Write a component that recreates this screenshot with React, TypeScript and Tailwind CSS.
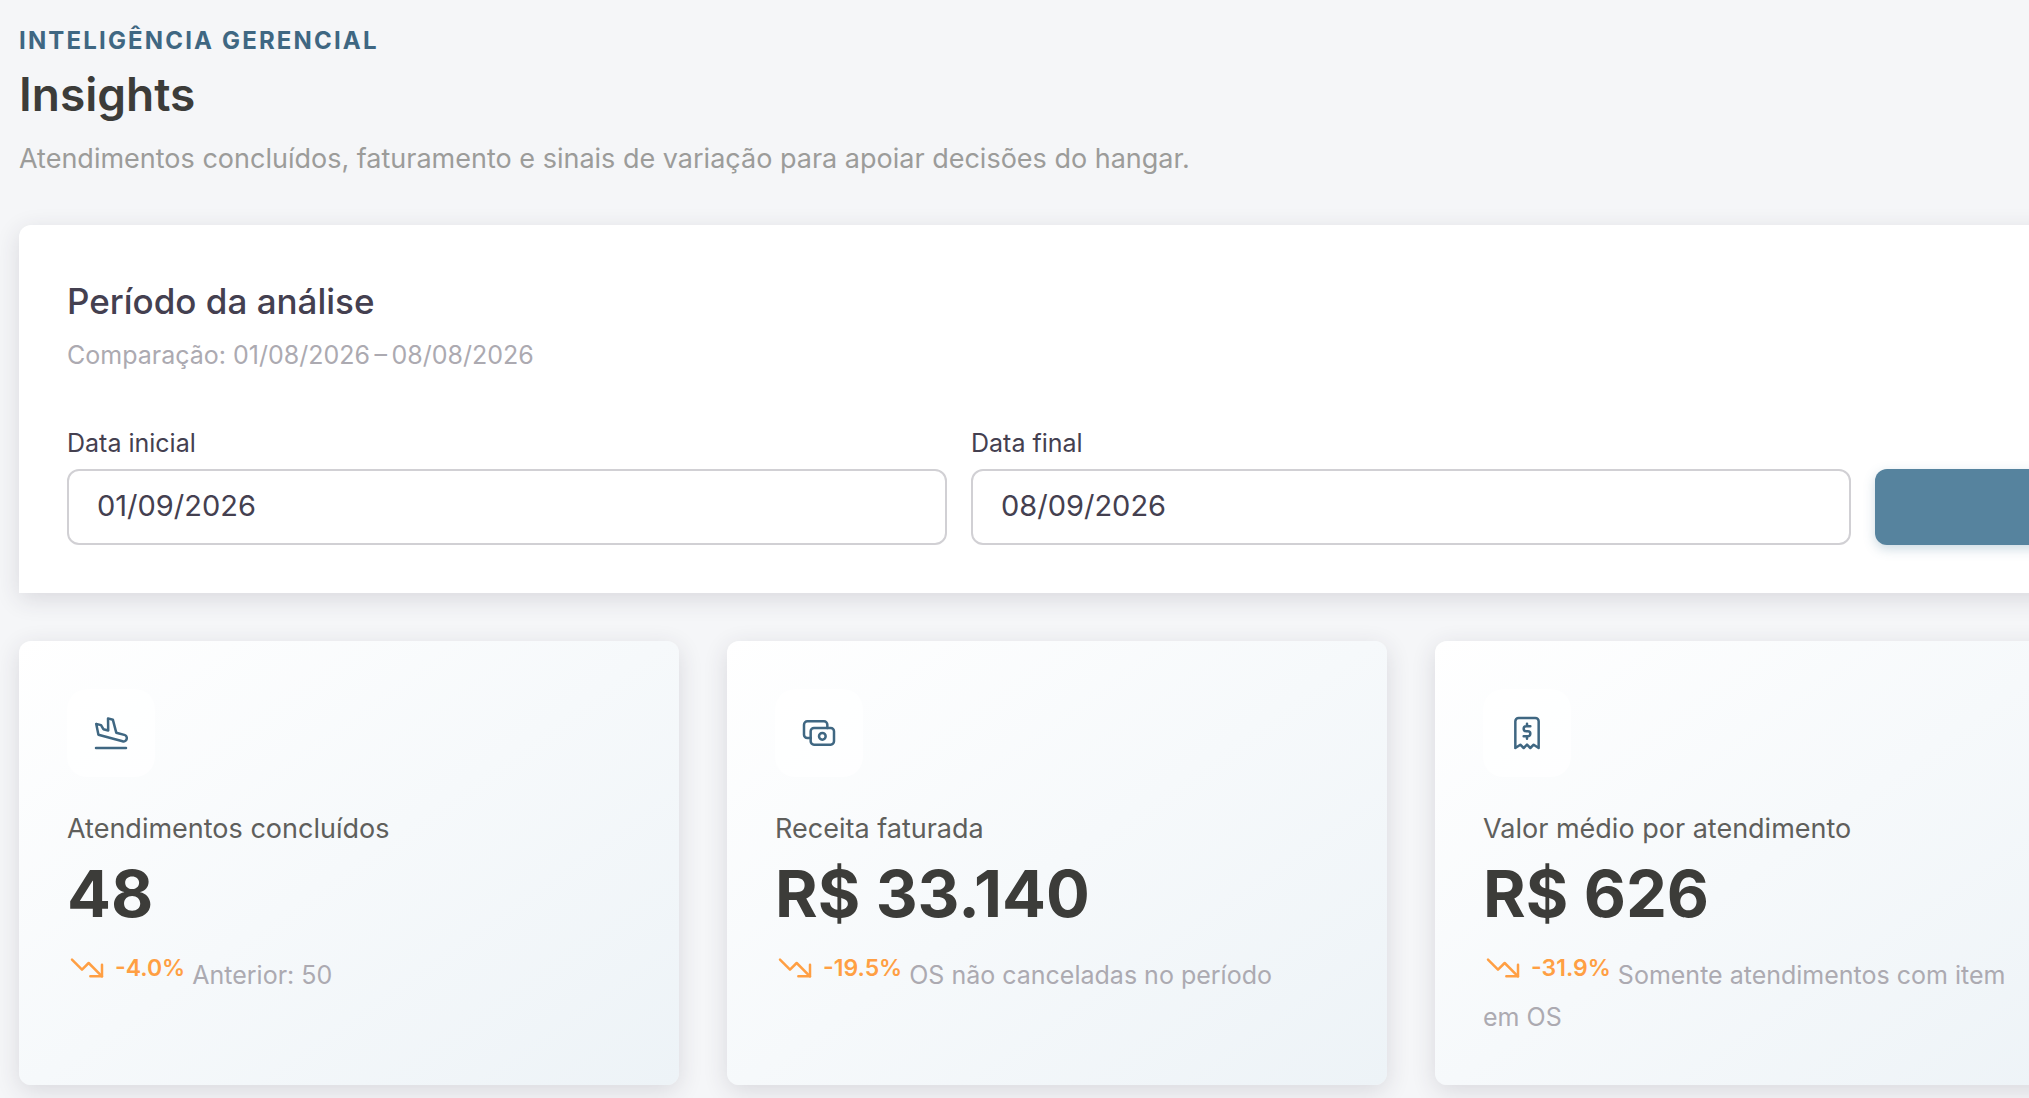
import { useState } from "react";
import type { ReactNode } from "react";

interface Kpi {
  label: string;
  value: string;
  change: string;
  caption: string;
  icon: ReactNode;
}

function Icon({ children }: { children: ReactNode }) {
  return (
    <svg
      className="size-10 shrink-0"
      viewBox="0 0 24 24"
      fill="none"
      stroke="currentColor"
      strokeWidth={1.5}
      strokeLinecap="round"
      strokeLinejoin="round"
      aria-hidden="true"
    >
      {children}
    </svg>
  );
}

const kpis: Kpi[] = [
  {
    label: "Atendimentos concluídos",
    value: "48",
    change: "-4.0%",
    caption: "Anterior: 50",
    icon: (
      <Icon>
        <path d="M15.157 11.81l4.83 1.295a2 2 0 1 1 -1.036 3.863l-14.489 -3.882l-1.345 -6.572l2.898 .776l1.414 2.45l2.898 .776l-.12 -7.279l2.898 .777l2.052 7.797z" />
        <path d="M3 21h18" />
      </Icon>
    ),
  },
  {
    label: "Receita faturada",
    value: "R$ 33.140",
    change: "-19.5%",
    caption: "OS não canceladas no período",
    icon: (
      <Icon>
        <rect x="7" y="9" width="14" height="10" rx="2" />
        <circle cx="14" cy="14" r="2" />
        <path d="M17 9v-2a2 2 0 0 0 -2 -2h-10a2 2 0 0 0 -2 2v6a2 2 0 0 0 2 2h2" />
      </Icon>
    ),
  },
  {
    label: "Valor médio por atendimento",
    value: "R$ 626",
    change: "-31.9%",
    caption: "Somente atendimentos com item em OS",
    icon: (
      <Icon>
        <path d="M5 21v-16a2 2 0 0 1 2 -2h10a2 2 0 0 1 2 2v16l-3 -2l-2 2l-2 -2l-2 2l-2 -2l-3 2" />
        <path d="M14 8h-2.5a1.5 1.5 0 0 0 0 3h1a1.5 1.5 0 0 1 0 3h-2.5m2 0v1.5m0 -9v1.5" />
      </Icon>
    ),
  },
];

function KpiCard({ kpi }: { kpi: Kpi }) {
  return (
    <article className="rounded-xl bg-linear-145 from-white to-[#edf3f7] p-12 pb-[47px] shadow-[0_6px_24px_rgba(47,43,61,0.14)]">
      <div className="flex size-22 items-center justify-center rounded-[20px] bg-white/70 text-[#3f6782]">
        {kpi.icon}
      </div>
      <h3 className="mt-[31px] text-[27px] leading-[42px] text-[#5f5f5c]">{kpi.label}</h3>
      <p className="text-[65px] leading-[87px] font-bold text-[#3c3c39]">{kpi.value}</p>
      <p className="mt-[9px] text-[25px] leading-[42px] text-[#acaab1]">
        <span className="inline-flex h-11 items-center gap-2 align-text-bottom text-[23px] leading-7 font-semibold text-[#ff9f43]">
          <Icon>
            <path d="M3 7l6 6l4 -4l8 8" />
            <path d="M21 10v7h-7" />
          </Icon>
          {kpi.change}
        </span>{" "}
        {kpi.caption}
      </p>
    </article>
  );
}

interface DateFieldProps {
  id: string;
  label: string;
  value: string;
  onChange: (value: string) => void;
}

function DateField({ id, label, value, onChange }: DateFieldProps) {
  return (
    <div className="flex flex-col gap-2">
      <label htmlFor={id} className="text-[25px] leading-9 text-[#444050]">
        {label}
      </label>
      <input
        id={id}
        type="text"
        value={value}
        onChange={(e) => onChange(e.target.value)}
        className="h-[76px] w-full rounded-xl border-2 border-[#d1d0d4] bg-white px-7 pb-1 text-[29px] text-[#444050] outline-none"
      />
    </div>
  );
}

export default function App() {
  const [start, setStart] = useState("01/09/2026");
  const [end, setEnd] = useState("08/09/2026");

  return (
    <div className="min-h-screen overflow-hidden bg-[#f5f6f8] font-['Inter',sans-serif]">
      {/* Content runs wider than the window, the rest is cut off on the right */}
      <main className="flex w-[138.15%] flex-col gap-12 pt-[21px] pb-12 pl-[19px]">
        <header>
          <p className="text-2xl leading-10 font-bold tracking-[0.09em] text-[#3f6782] uppercase">
            Inteligência gerencial
          </p>
          <h1 className="text-[46px] leading-[66px] font-semibold text-[#3c3c39]">Insights</h1>
          <p className="mt-[14px] text-[27px] leading-9 text-[#9c9c9a]">
            Atendimentos concluídos, faturamento e sinais de variação para apoiar decisões do hangar.
          </p>
        </header>

        <section className="rounded-t-xl bg-white p-12 shadow-[0_6px_24px_rgba(47,43,61,0.14)]">
          <h2 className="text-[35px] leading-[56px] font-medium text-[#444050]">Período da análise</h2>
          <p className="mt-[6px] text-[25px] leading-10 text-[#acaab1]">
            Comparação: 01/08/2026&#8201;–&#8201;08/08/2026
          </p>
          <form
            className="mt-[50px] grid grid-cols-3 items-end gap-6"
            onSubmit={(e) => e.preventDefault()}
          >
            <DateField id="start" label="Data inicial" value={start} onChange={setStart} />
            <DateField id="end" label="Data final" value={end} onChange={setEnd} />
            <button
              type="submit"
              aria-label="Aplicar"
              className="h-[76px] rounded-xl bg-[#56839e] shadow-[0_4px_12px_rgba(86,131,158,0.3)]"
            />
          </form>
        </section>

        <section className="grid grid-cols-4 gap-12">
          {kpis.map((kpi) => (
            <KpiCard key={kpi.label} kpi={kpi} />
          ))}
        </section>
      </main>
    </div>
  );
}
